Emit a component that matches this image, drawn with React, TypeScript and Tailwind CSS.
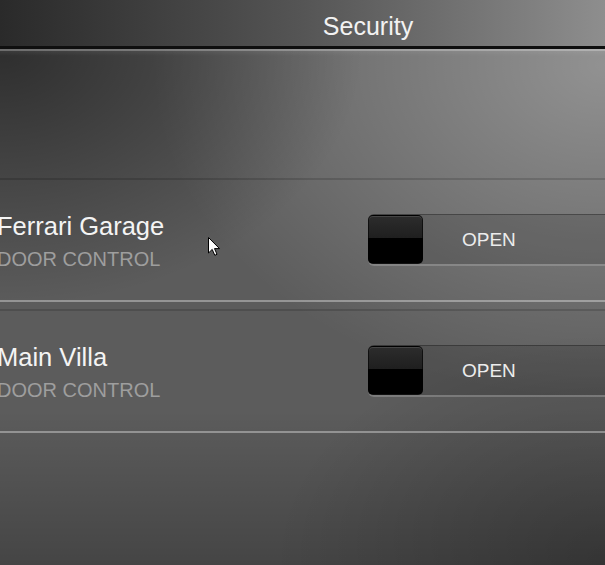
import React from "react"

const doors = [
  { name: "Ferrari Garage", kind: "DOOR CONTROL", state: "OPEN" },
  { name: "Main Villa", kind: "DOOR CONTROL", state: "OPEN" },
]

function DoorToggle({ label }: { label: string }) {
  return (
    <div className="ml-auto flex h-[52px] w-[237px] shrink-0 items-stretch rounded-l-[6px] border-t border-b-2 border-t-black/30 border-b-white/25 bg-black/[0.13]">
      {/* knob */}
      <div className="w-[55px] shrink-0 rounded-[5px] border border-black/60 bg-[linear-gradient(to_bottom,#2c2c2c_0%,#1f1f1f_47%,#000_47%,#000_100%)] shadow-[inset_0_1px_0_rgba(255,255,255,0.12)]" />
      <span className="ml-[39px] self-center text-[19px] leading-none text-[#ececec]">
        {label}
      </span>
    </div>
  )
}

export default function App() {
  return (
    <div className="relative flex h-[565px] w-full flex-col overflow-hidden font-['Liberation_Sans',Arial,sans-serif]">
      {/* Title bar */}
      <header className="flex h-[46px] shrink-0 items-center justify-center bg-gradient-to-r from-[#2a2a2a] via-[#555555] to-[#8e8e8e] pl-[131px]">
        <h1 className="pt-[7px] text-[25px] leading-none text-[#f2f2f2]">Security</h1>
      </header>
      <div className="h-[3px] shrink-0 bg-[#0f0f0f]" />

      {/* Body */}
      <main className="flex flex-1 flex-col bg-[#5c5c5c] [background-image:radial-gradient(ellipse_55%_45%_at_100%_100%,rgba(0,0,0,0.25),transparent),linear-gradient(to_bottom,transparent_70%,rgba(0,0,0,0.25)),radial-gradient(ellipse_60%_50%_at_0%_0%,rgba(0,0,0,0.5),transparent),radial-gradient(ellipse_75%_65%_at_100%_3%,rgba(255,255,255,0.33),transparent)]">
        <div className="h-[2px] bg-white/30" />
        <div className="h-[127px] bg-gradient-to-b from-white/[0.06] to-transparent to-[4%]" />

        {doors.map((door, i) => (
          <section
            key={door.name}
            className={`flex h-[124px] items-center border-t-2 border-b-2 border-t-black/15 border-b-white/35 ${
              i > 0 ? "mt-[7px]" : ""
            }`}
          >
            <div className="-ml-[3px] flex flex-col pt-[2px]">
              <span className="text-[25.5px] leading-[28px] text-[#f4f4f4]">{door.name}</span>
              <span className="mt-[7px] text-[20px] leading-[24px] text-[#9e9e9e]">{door.kind}</span>
            </div>
            <DoorToggle label={door.state} />
          </section>
        ))}
      </main>

      {/* mouse pointer */}
      <svg
        className="pointer-events-none absolute left-[208px] top-[237px]"
        width="13"
        height="20"
        viewBox="0 0 13 20"
      >
        <path
          d="M0.5 0.5 L0.5 16 L4.2 12.4 L6.8 18.3 L9 17.3 L6.5 11.6 L11.5 11.6 Z"
          fill="#fff"
          stroke="#000"
          strokeWidth="1"
        />
      </svg>
    </div>
  )
}
